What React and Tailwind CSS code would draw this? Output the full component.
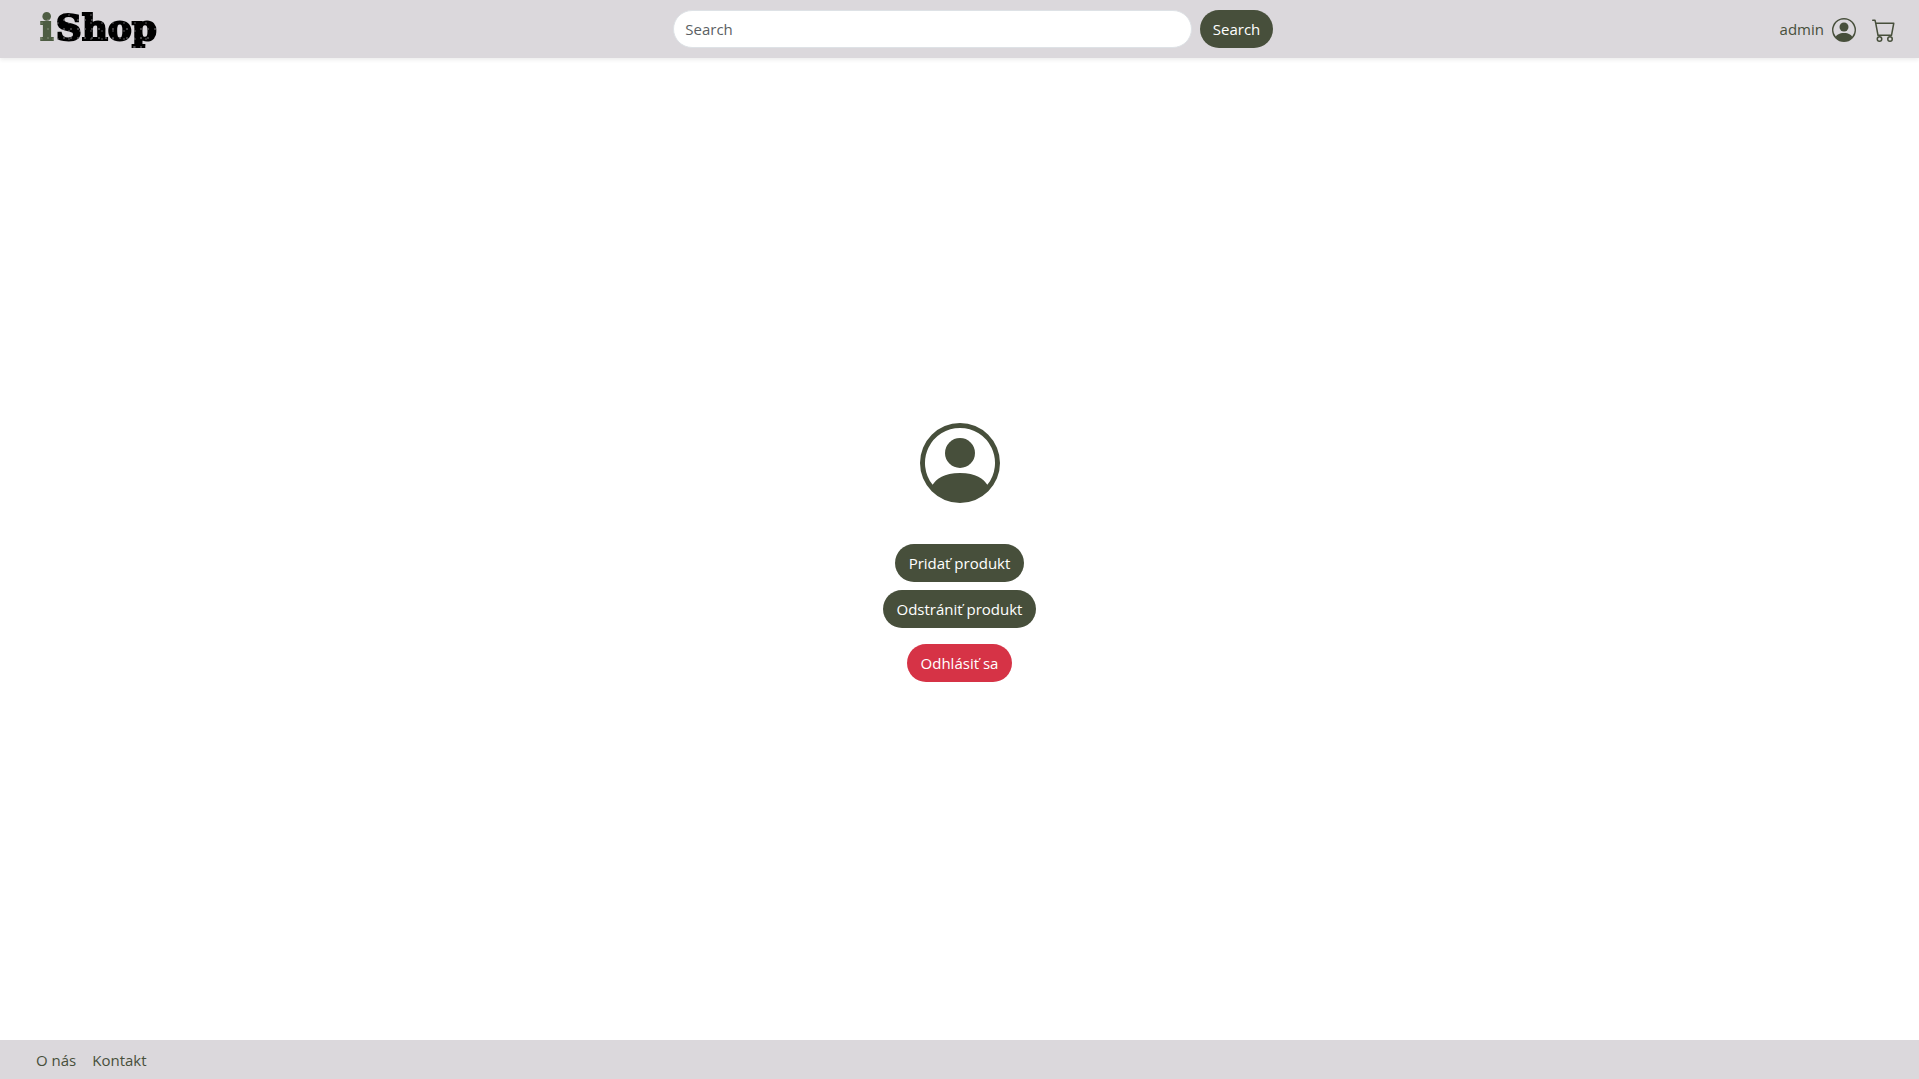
import React from "react";
import { BsPersonCircle, BsCart } from "react-icons/bs";

const pill = "h-[38px] rounded-full text-[15px] leading-6 text-white";

function Logo() {
  return (
    <a
      href="#"
      className="flex w-[129px] items-center font-['DejaVu_Serif',serif] text-[36px] leading-none font-bold whitespace-nowrap"
    >
      <span className="bg-[#4e5d43] bg-[radial-gradient(circle_at_3px_2px,#7b866f_0.5px,transparent_1px),radial-gradient(circle_at_4px_6px,#6c7860_0.5px,transparent_1px)] bg-[size:7px_9px,11px_8px] bg-clip-text pb-1 pl-0.5 text-transparent [-webkit-text-stroke:2px_transparent]">
        i
      </span>
      <span className="bg-black bg-[radial-gradient(circle_at_3px_2px,#6a686b_0.5px,transparent_1px),radial-gradient(circle_at_4px_6px,#4a484b_0.5px,transparent_1px)] bg-[size:7px_9px,11px_8px] bg-clip-text px-0.5 pb-1 text-transparent [-webkit-text-stroke:2px_transparent]">
        Shop
      </span>
    </a>
  );
}

function Header() {
  return (
    <header className="flex h-[58px] items-center justify-between bg-[#dbd8dc] pr-[23px] pl-[38px] shadow-[0_2px_4px_rgba(0,0,0,0.075)]">
      <Logo />
      <form className="flex w-[600px] gap-2" role="search" onSubmit={(e) => e.preventDefault()}>
        <input
          type="search"
          placeholder="Search"
          aria-label="Search"
          className="h-[38px] min-w-0 flex-1 rounded-full border border-[#dee2e6] bg-white px-[11px] text-[15px] text-[#212529] outline-none placeholder:text-[#5b5f64]"
        />
        <button type="submit" className={`${pill} bg-[#474f3b] px-[13px]`}>
          Search
        </button>
      </form>
      <nav className="flex items-center gap-4 pt-px text-[#474f3b]">
        <a href="#" className="flex items-center gap-2 text-[15px]">
          admin
          <BsPersonCircle className="size-6" />
        </a>
        <a href="#" aria-label="Cart">
          <BsCart className="size-6" />
        </a>
      </nav>
    </header>
  );
}

export default function App() {
  return (
    <div className="flex min-h-screen flex-col bg-white font-['Open_Sans','Noto_Sans',sans-serif]">
      <Header />
      <main className="flex flex-1 flex-col items-center justify-center pt-[7px]">
        <BsPersonCircle className="mb-[41px] size-20 text-[#474f3b]" />
        <button type="button" className={`${pill} mb-2 bg-[#474f3b] px-[14px]`}>
          Pridať produkt
        </button>
        <button type="button" className={`${pill} mb-4 bg-[#474f3b] px-[14px]`}>
          Odstrániť produkt
        </button>
        <button type="button" className={`${pill} bg-[#d63346] px-[14px]`}>
          Odhlásiť sa
        </button>
      </main>
      <footer className="flex h-[39px] items-center gap-4 bg-[#dbd8dc] px-9 pt-0.5 text-[15px] text-[#474f3b]">
        <a href="#">O nás</a>
        <a href="#">Kontakt</a>
      </footer>
    </div>
  );
}
